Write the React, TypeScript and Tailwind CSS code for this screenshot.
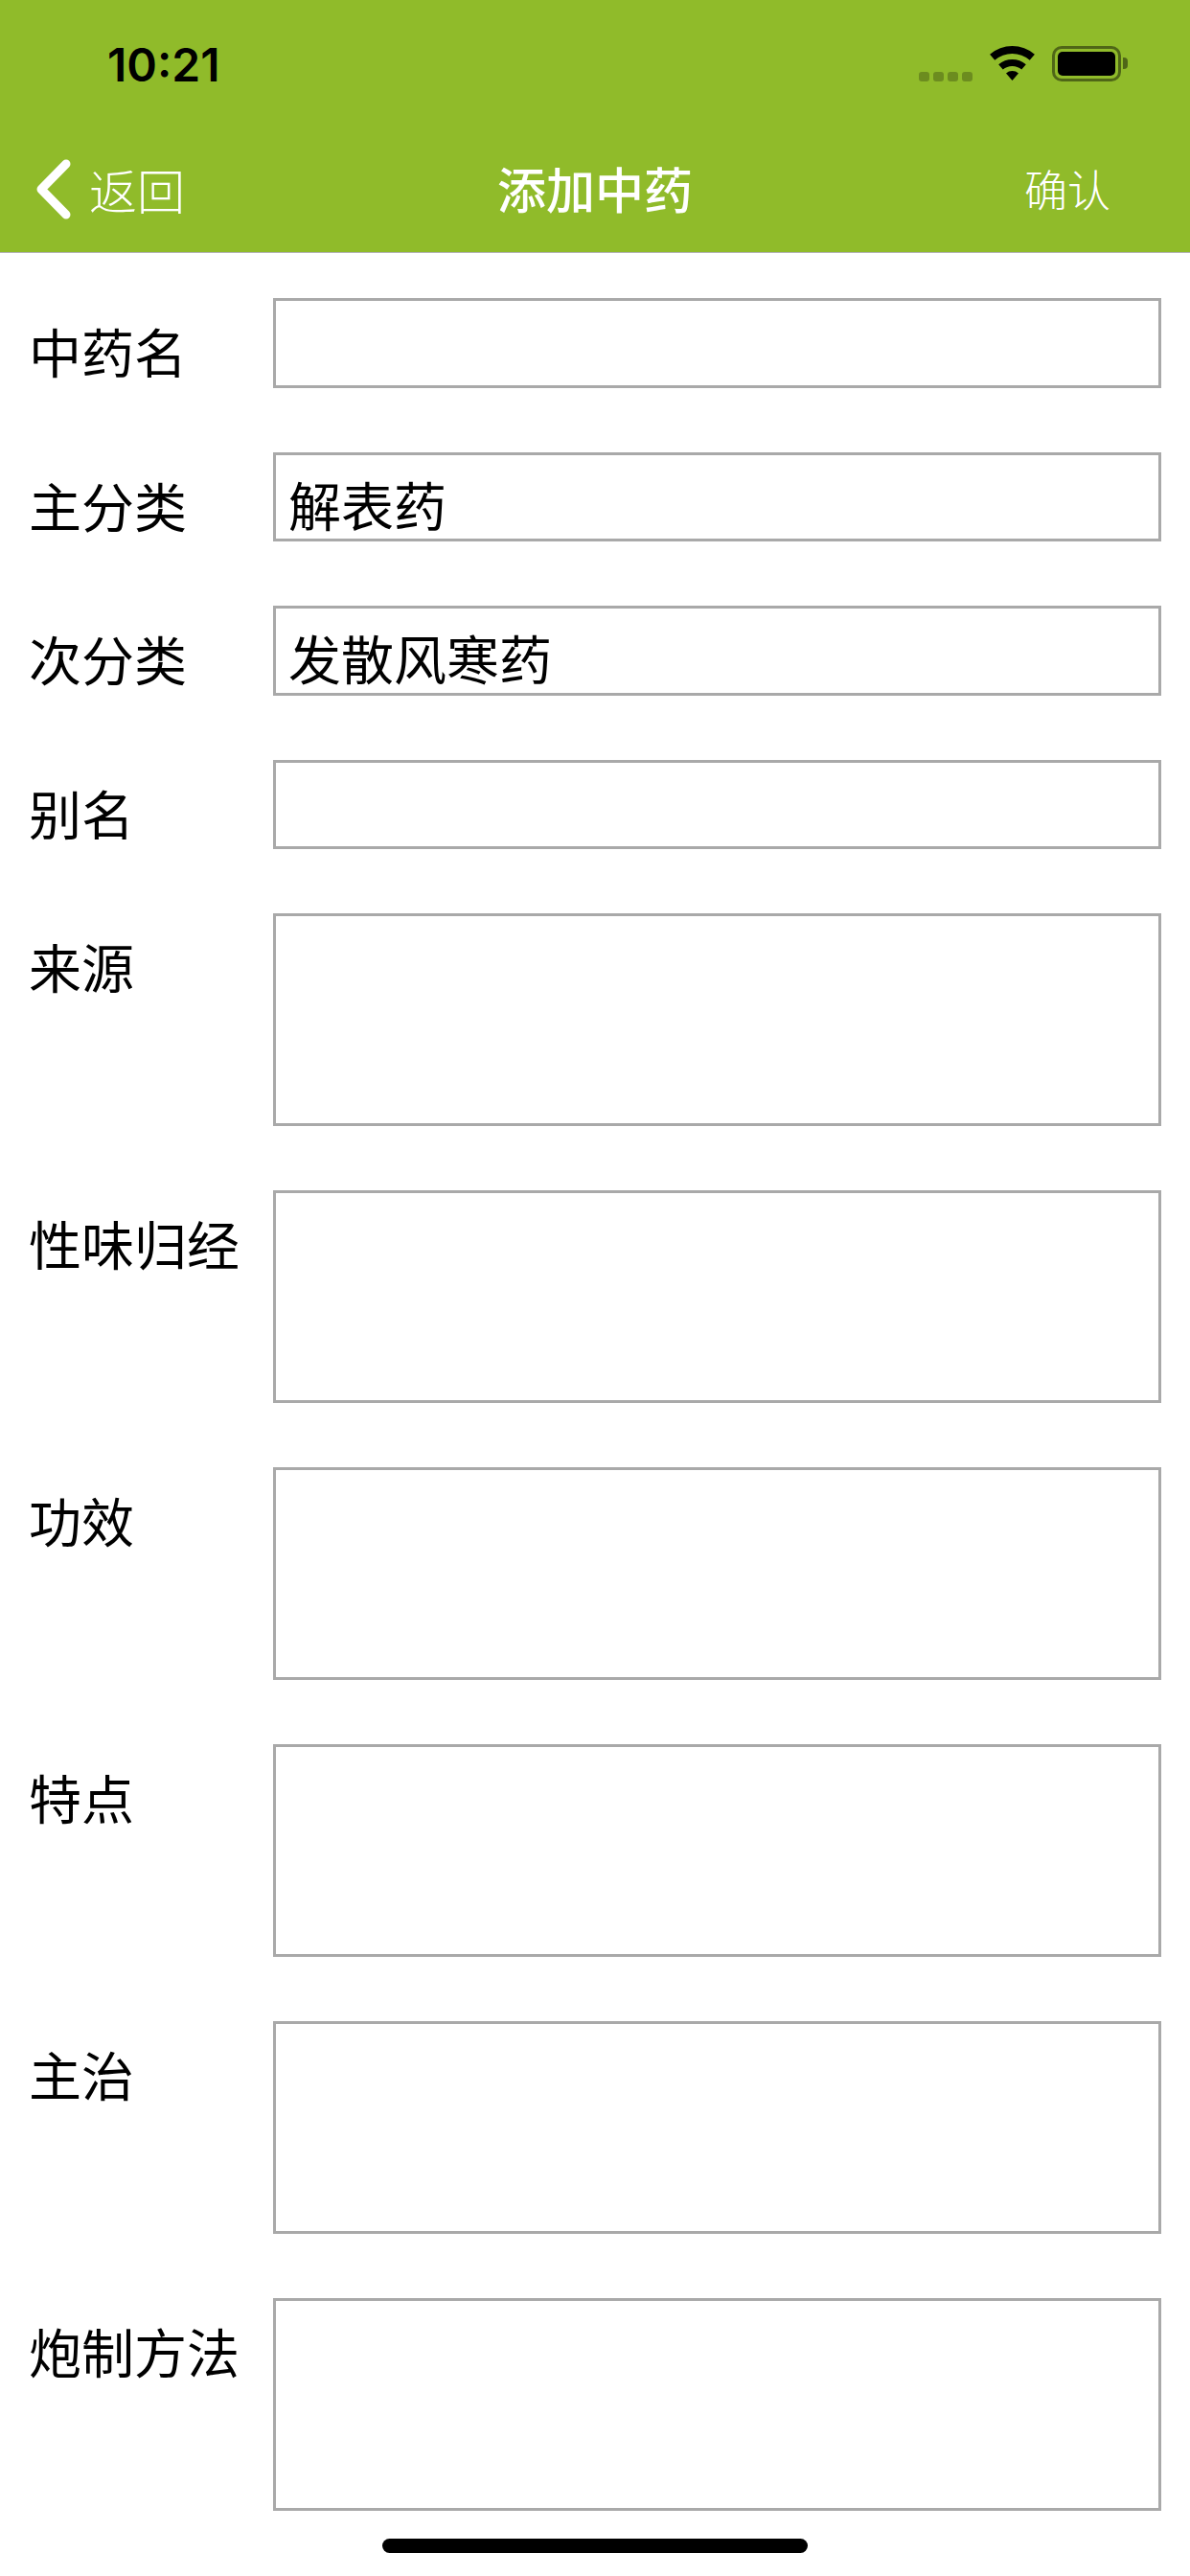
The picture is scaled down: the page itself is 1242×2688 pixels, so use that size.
import React from 'react';

const cjk = "font-['Noto_Sans_CJK_SC','Noto_Sans',sans-serif]";

const fields = [
  { label: '中药名' },
  { label: '主分类', value: '解表药' },
  { label: '次分类', value: '发散风寒药' },
  { label: '别名' },
  { label: '来源', multi: true },
  { label: '性味归经', multi: true },
  { label: '功效', multi: true },
  { label: '特点', multi: true },
  { label: '主治', multi: true },
  { label: '炮制方法', multi: true },
];

const StatusBar: React.FC = () => (
  <div className="h-[132px] flex items-center justify-between pl-[112px] pr-[65px]">
    <span className="font-['Inter','Liberation_Sans',sans-serif] text-[48px] leading-none font-semibold text-black pt-1">10:21</span>
    <div className="flex items-center">
      <div className="flex gap-[4px] mt-[27px] mr-[18px]">
        <div className="w-[11px] h-[10px] rounded-[3px] bg-black/25" />
        <div className="w-[11px] h-[10px] rounded-[3px] bg-black/25" />
        <div className="w-[11px] h-[10px] rounded-[3px] bg-black/25" />
        <div className="w-[11px] h-[10px] rounded-[3px] bg-black/25" />
      </div>
      <svg width="47" height="36" viewBox="0 0 47 36" className="mr-[18px]">
        <path d="M.1 8.7A36 36 0 0 1 46.9 8.7L41.7 14.8A28 28 0 0 0 5.3 14.8Z" fill="#000" />
        <path d="M9.2 19.3A22 22 0 0 1 37.8 19.3L33.25 24.6A15 15 0 0 0 13.75 24.6Z" fill="#000" />
        <path d="M17 28.4A10 10 0 0 1 30 28.4L23.5 36Z" fill="#000" />
      </svg>
      <div className="w-[72px] h-[37px] rounded-[10px] border-[3px] border-black/45 p-[3px]">
        <div className="w-full h-full rounded-[5px] bg-black" />
      </div>
      <div className="w-[5px] h-[12px] ml-[2px] rounded-r-[4px] bg-black/45" />
    </div>
  </div>
);

const NavBar: React.FC = () => (
  <div className={`h-[131px] grid grid-cols-3 items-center px-[38px] text-white ${cjk}`}>
    <div className="flex items-center gap-[18px]">
      <svg width="37" height="63" viewBox="0 0 37 63" fill="none">
        <path d="M31 5L5 31.5L31 58" stroke="#fff" strokeWidth="9" strokeLinecap="round" strokeLinejoin="round" />
      </svg>
      <span className="text-[50px] leading-none font-light -mt-[2px]">返回</span>
    </div>
    <h1 className="text-center text-[51px] leading-none font-medium -mt-[2px]">添加中药</h1>
    <span className="justify-self-end mr-[45px] text-[45px] leading-none font-light -mt-[2px]">确认</span>
  </div>
);

const Field: React.FC<{ label: string; value?: string; multi?: boolean }> = ({ label, value, multi }) => (
  <div className="flex">
    <label className="w-[285px] shrink-0 pl-[30px] pt-[27px] text-[55px] leading-[54px] text-black">{label}</label>
    <div className={`w-[927px] border-[3px] border-[#a9a9a9] bg-white pl-[13px] pt-[23px] text-[55px] leading-[54px] text-black ${multi ? 'h-[222px]' : 'h-[93.5px]'}`}>
      {value}
    </div>
  </div>
);

export default function App() {
  return (
    <div className={`w-[1242px] h-[2688px] bg-white overflow-hidden relative ${cjk}`}>
      <header className="bg-[#90bb2a] border-b border-[#b2b2b2]">
        <StatusBar />
        <NavBar />
      </header>
      <form className="flex flex-col gap-[67px] pt-[47px]">
        {fields.map((f) => (
          <Field key={f.label} label={f.label} value={f.value} multi={f.multi} />
        ))}
      </form>
      <div className="absolute left-[399px] bottom-[24px] w-[444px] h-[15px] rounded-full bg-black" />
    </div>
  );
}
